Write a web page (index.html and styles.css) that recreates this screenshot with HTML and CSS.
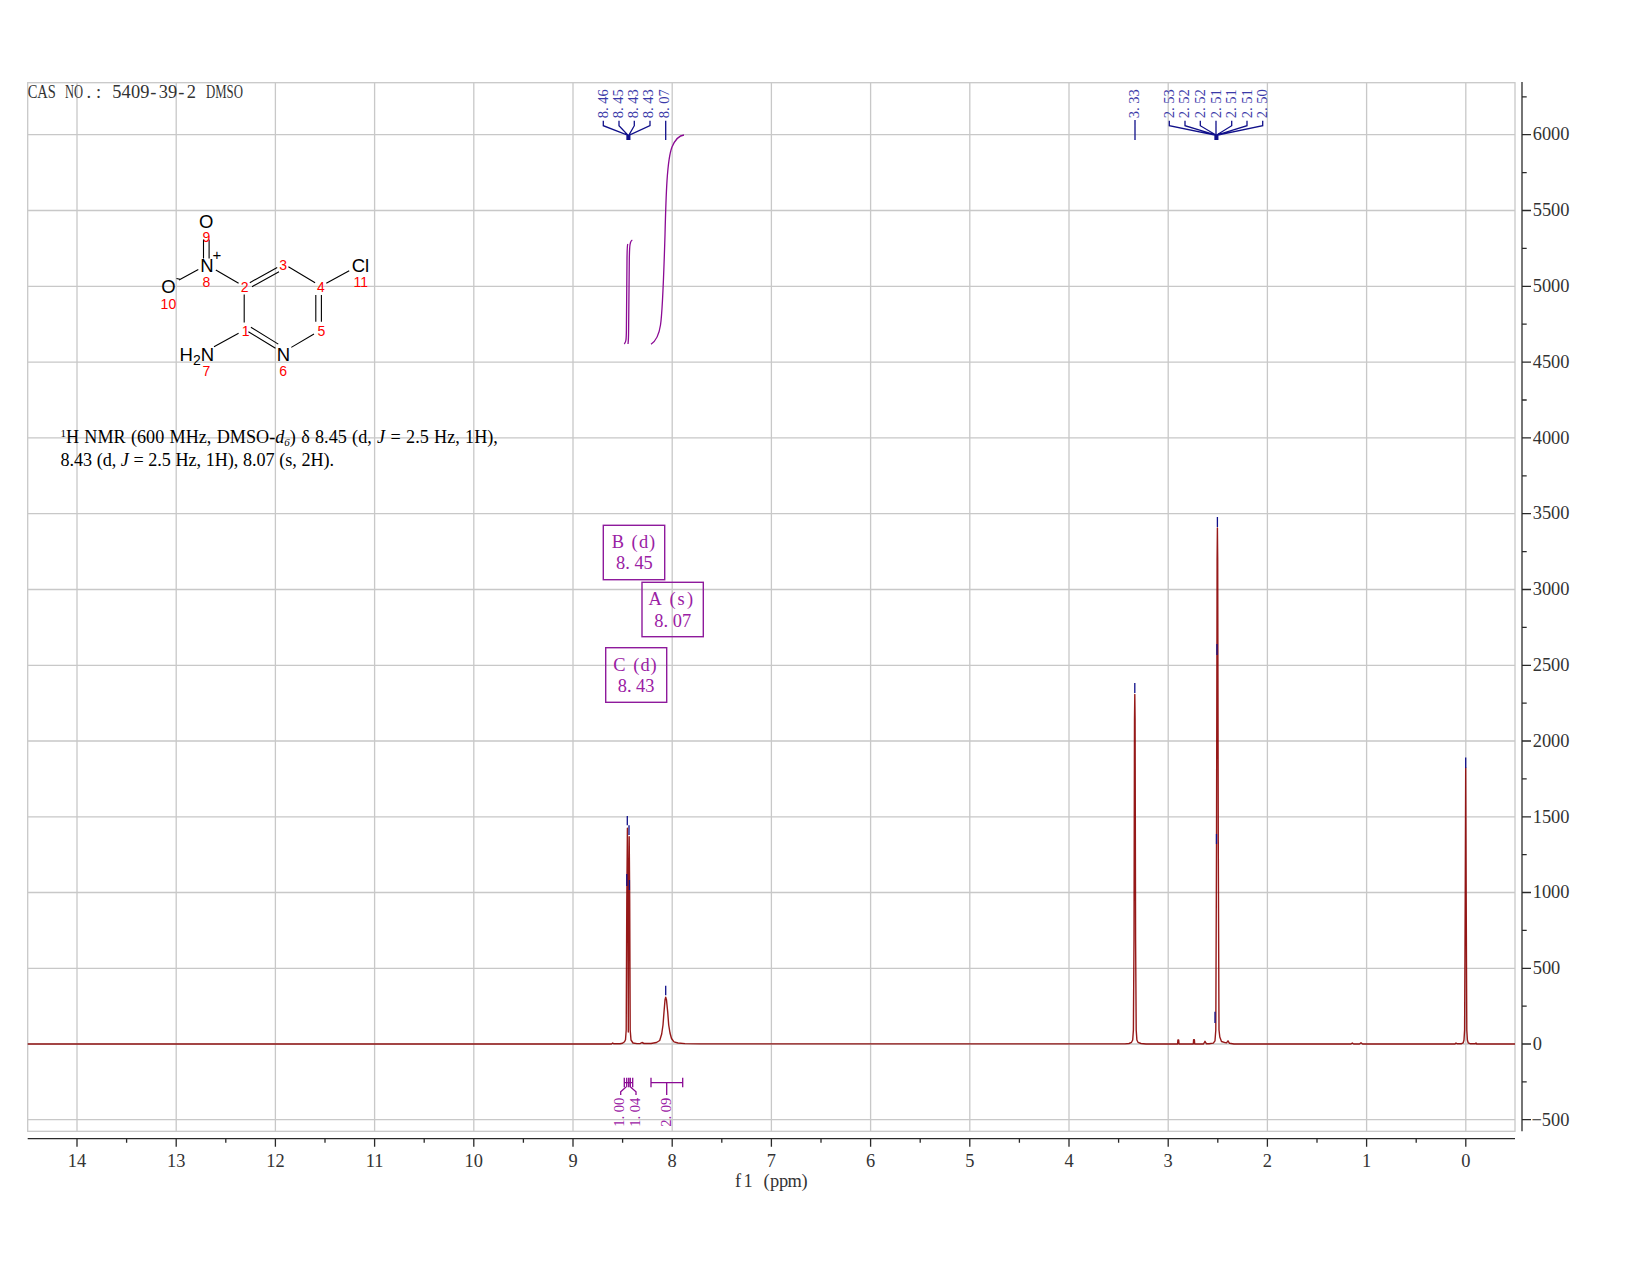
FILE: index.html
```html
<!DOCTYPE html>
<html lang="en">
<head>
<meta charset="utf-8">
<title>1H NMR spectrum</title>
<link rel="stylesheet" href="styles.css">
</head>
<body>
<figure class="chart">
<svg class="plot" width="1650" height="1275" viewBox="0 0 1650 1275" xmlns="http://www.w3.org/2000/svg">
  <!-- grid -->
  <path class="grid" d="M77 82.7V1131.3M176.2 82.7V1131.3M275.4 82.7V1131.3M374.6 82.7V1131.3M473.8 82.7V1131.3M573 82.7V1131.3M672.2 82.7V1131.3M771.4 82.7V1131.3M870.6 82.7V1131.3M969.8 82.7V1131.3M1069 82.7V1131.3M1168.2 82.7V1131.3M1267.4 82.7V1131.3M1366.6 82.7V1131.3M1465.8 82.7V1131.3"/>
  <path class="grid" d="M27.7 134.7H1515M27.7 210.5H1515M27.7 286.3H1515M27.7 362.1H1515M27.7 437.9H1515M27.7 513.7H1515M27.7 589.5H1515M27.7 665.3H1515M27.7 741H1515M27.7 816.8H1515M27.7 892.5H1515M27.7 968.3H1515M27.7 1044H1515M27.7 1119.7H1515"/>
  <rect class="grid" x="27.7" y="82.7" width="1487.3" height="1048.6"/>

  <!-- axes -->
  <path class="axis" d="M27.7 1138.7H1515"/>
  <path class="axis" d="M77 1138.7V1146.7M176.2 1138.7V1146.7M275.4 1138.7V1146.7M374.6 1138.7V1146.7M473.8 1138.7V1146.7M573 1138.7V1146.7M672.2 1138.7V1146.7M771.4 1138.7V1146.7M870.6 1138.7V1146.7M969.8 1138.7V1146.7M1069 1138.7V1146.7M1168.2 1138.7V1146.7M1267.4 1138.7V1146.7M1366.6 1138.7V1146.7M1465.8 1138.7V1146.7"/>
  <path class="axis" d="M126.6 1138.7V1142.7M225.8 1138.7V1142.7M325 1138.7V1142.7M424.2 1138.7V1142.7M523.4 1138.7V1142.7M622.6 1138.7V1142.7M721.8 1138.7V1142.7M821 1138.7V1142.7M920.2 1138.7V1142.7M1019.4 1138.7V1142.7M1118.6 1138.7V1142.7M1217.8 1138.7V1142.7M1317 1138.7V1142.7M1416.2 1138.7V1142.7"/>
  <path class="axis" d="M1522 82V1131.3"/>
  <path class="axis" d="M1522 134.7H1531M1522 210.5H1531M1522 286.3H1531M1522 362.1H1531M1522 437.9H1531M1522 513.7H1531M1522 589.5H1531M1522 665.3H1531M1522 741H1531M1522 816.8H1531M1522 892.5H1531M1522 968.3H1531M1522 1044H1531M1522 1119.7H1531"/>
  <path class="axis" d="M1522 96.8H1526.7M1522 172.6H1526.7M1522 248.4H1526.7M1522 324.2H1526.7M1522 400H1526.7M1522 475.8H1526.7M1522 551.6H1526.7M1522 627.4H1526.7M1522 703.1H1526.7M1522 778.9H1526.7M1522 854.7H1526.7M1522 930.4H1526.7M1522 1006.2H1526.7M1522 1081.9H1526.7"/>

  <g class="tick-x">
    <text x="77" y="1167">14</text><text x="176.2" y="1167">13</text><text x="275.4" y="1167">12</text><text x="374.6" y="1167">11</text><text x="473.8" y="1167">10</text><text x="573" y="1167">9</text><text x="672.2" y="1167">8</text><text x="771.4" y="1167">7</text><text x="870.6" y="1167">6</text><text x="969.8" y="1167">5</text><text x="1069" y="1167">4</text><text x="1168.2" y="1167">3</text><text x="1267.4" y="1167">2</text><text x="1366.6" y="1167">1</text><text x="1465.8" y="1167">0</text>
  </g>
  <g class="tick-y">
    <text x="1532.7" y="140.4">6000</text><text x="1532.7" y="216.2">5500</text><text x="1532.7" y="292">5000</text><text x="1532.7" y="367.8">4500</text><text x="1532.7" y="443.6">4000</text><text x="1532.7" y="519.4">3500</text><text x="1532.7" y="595.2">3000</text><text x="1532.7" y="671">2500</text><text x="1532.7" y="746.8">2000</text><text x="1532.7" y="822.6">1500</text><text x="1532.7" y="898.3">1000</text><text x="1532.7" y="974">500</text><text x="1532.7" y="1050">0</text><text x="1531.5" y="1125.5">−500</text>
  </g>
  <text class="mono" x="735 743.5 752 763.5 770 779 787.5 801.5" y="1187">f1 (ppm)</text>

  <!-- header -->
  <text class="mono" transform="translate(27.7 97.7) scale(.788 1)">CAS</text>
  <text class="mono" transform="translate(65 97.7) scale(.68 1)">NO</text>
  <text class="mono" x="86.5 96" y="97.7">.:</text>
  <text class="mono" x="112.3 121.6 130.9 140.2 150.3 158.8 168.1 178.2 186.7" y="97.7">5409-39-2</text>
  <text class="mono" transform="translate(206 97.7) scale(.696 1)">DMSO</text>

  <!-- spectrum -->
  <path class="fid" d="M27.7 1044H611.5L612.7 1043 613.9 1043.8H620L622.5 1043.3 624.5 1041.8 625.5 1039.8 626.2 1030 626.8 900 627.4 828.3 627.9 900 628.3 1032 628.7 900 629.2 836.7 629.7 900 630.2 1030 631 1040 633 1043 637 1043.6H640L642 1042.5 644 1043.5 651 1043.5 656.5 1042.5 659.7 1040.5 661.7 1034 663 1025 664 1012 665 1000 665.7 997.3 666.5 1000 667.7 1012 668.7 1025 670 1033 671.5 1038.5 674 1041.9 678 1043 685 1043.6 700 1043.9H1125L1129 1043.5 1131.5 1042.3 1132.7 1040 1133.4 1030 1134 940 1134.5 720 1134.8 694.5 1135.1 720 1135.6 940 1136.2 1030 1136.9 1040 1138 1042.3 1141 1043.5 1146 1044H1177.6L1177.9 1040 1178.7 1040 1179 1044H1193.3L1193.6 1039.8 1194.4 1039.8 1194.7 1044H1203.5L1205 1041.3 1206.5 1043.8H1209L1213.3 1043.1 1215 1040.8 1215.8 1030 1216.5 850 1217.1 560 1217.4 528 1217.7 560 1218.3 850 1219 1030 1219.8 1037 1221.5 1041.5 1225 1042.6 1226.5 1042.8 1228 1040.8 1229.5 1043.3 1234 1044H1351L1352.3 1043 1353.6 1044H1359.5L1361 1042.8 1362.5 1044H1455L1456 1043 1457 1043.7H1461.5L1463.2 1042.8 1464 1040 1464.6 1030 1465.2 900 1465.7 768 1466.2 900 1466.8 1030 1467.4 1040 1468.2 1042.8 1470 1043.7H1475.3L1476 1043 1476.7 1044H1515"/>

  <!-- integrals -->
  <path class="integ" d="M624.3 344C626 342 626.3 340 626.4 330L627 260C627.1 248 627.2 245 627.8 244"/>
  <path class="integ" d="M628 344C628.3 342 628.5 340 628.6 330L629.3 260C629.5 245 630 241 632.3 240"/>
  <path class="integ" d="M651 344.3C656 341 659 335 660.5 325C662.5 312 663.5 285 665 235C666 195 667 160 672 147C675 140 679 135.5 684 135"/>
  <path class="integ" d="M651 1077.7V1087.3M651 1082.7H682.7M682.7 1077.7V1087.3M666.7 1082.7V1095"/>
  <path class="integ" d="M624.3 1077.7V1087.3M626.7 1077.7V1087.3M628.7 1077.7V1087.3M630.3 1077.7V1087.3M632.7 1077.7V1087.3M624.3 1082.7H632.7"/>
  <path class="integ" d="M620.7 1095V1091.7L626 1087M636 1095V1091.7L630.5 1087"/>
  <text class="integ-label" transform="translate(624.3 1126.7) rotate(-90)" dx="0 0 3.6">1.00</text>
  <text class="integ-label" transform="translate(640 1126.7) rotate(-90)" dx="0 0 3.6">1.04</text>
  <text class="integ-label" transform="translate(671 1126.7) rotate(-90)" dx="0 0 3.6">2.09</text>

  <!-- peak picks -->
  <path class="mark" d="M627.3 816V825.3M629 825.3V835M626.8 874V886M629.4 880V890M665.7 985.7V995.3M1134.8 683V693M1217.4 517V527M1217 644V655M1216.5 834V844M1215 1011.7V1023M1465.7 757.6V768"/>
  <path class="mark" d="M603.3 120.7V125.7L627 135V140M619 120.7V125.7L627.8 135V140M634.3 120.7V125.7L629 135V140M650 120.7V125.7L629.8 135V140M665.7 120.7V140M1135 120V140M1169.3 120.7V125.7L1215 135V140M1185 120.7V125.7L1215.6 135V140M1200.3 120.7V125.7L1216 135V140M1216 120.7V140M1231.7 120.7V125.7L1216.6 135V140M1247 120.7V125.7L1217.2 135V140M1262.7 120.7V125.7L1217.8 135V140"/>
  <g class="pick">
    <text transform="translate(607.7 118.3) rotate(-90)" dx="0 0 3.6">8.46</text>
    <text transform="translate(622.7 118.3) rotate(-90)" dx="0 0 3.6">8.45</text>
    <text transform="translate(638.3 118.3) rotate(-90)" dx="0 0 3.6">8.43</text>
    <text transform="translate(653.3 118.3) rotate(-90)" dx="0 0 3.6">8.43</text>
    <text transform="translate(669.3 118.3) rotate(-90)" dx="0 0 3.6">8.07</text>
    <text transform="translate(1139.3 118.3) rotate(-90)" dx="0 0 3.6">3.33</text>
    <text transform="translate(1174 118.3) rotate(-90)" dx="0 0 3.6">2.53</text>
    <text transform="translate(1189 118.3) rotate(-90)" dx="0 0 3.6">2.52</text>
    <text transform="translate(1205 118.3) rotate(-90)" dx="0 0 3.6">2.52</text>
    <text transform="translate(1220.7 118.3) rotate(-90)" dx="0 0 3.6">2.51</text>
    <text transform="translate(1236 118.3) rotate(-90)" dx="0 0 3.6">2.51</text>
    <text transform="translate(1251.7 118.3) rotate(-90)" dx="0 0 3.6">2.51</text>
    <text transform="translate(1266.7 118.3) rotate(-90)" dx="0 0 3.6">2.50</text>
  </g>

  <!-- multiplet boxes -->
  <rect class="box" x="603.3" y="525.3" width="61.4" height="54.4"/>
  <rect class="box" x="642" y="582.3" width="61.3" height="54.4"/>
  <rect class="box" x="605.7" y="647.7" width="61" height="54.6"/>
  <g class="box-text">
    <text x="611.7 620.9 631.6 639 649" y="547.7">B (d)</text>
    <text x="616" y="569.3" dx="0 0 4.6">8.45</text>
    <text x="648.5 658.7 669.6 677.5 687" y="605">A (s)</text>
    <text x="654.3" y="626.7" dx="0 0 4.6">8.07</text>
    <text x="613.3 622.5 633.2 640.6 650.6" y="670.7">C (d)</text>
    <text x="617.7" y="691.7" dx="0 0 4.6">8.43</text>
  </g>

  <!-- molecule -->
  <path class="bond" d="M244.2 294.4V322.4M250.9 327.3L278.3 344.1M248.4 331.7L275.5 348.3M291.3 347.4L314 334M315.8 295V321.7M321.4 295V321.7M288.4 266.7L315.1 282.7M249.8 282.7L277.2 267.4M252 286.7L279 271.7M215.8 270L238.6 283.3M179 280L198.3 269.4M176.5 278.5L180 279.3M203.5 239.4V258.4M209.1 239.4V258.4M326.3 283.3L349.2 270.7M214 346.7L238.6 333.3"/>
  <g class="atom">
    <text x="206.3" y="227.7">O</text>
    <text x="207" y="271.7">N</text>
    <text x="168.4" y="293.3">O</text>
    <text x="360.4" y="272">Cl</text>
    <text x="283.5" y="361">N</text>
    <text x="196.8" y="361">H<tspan class="sub" dy="4">2</tspan><tspan dy="-4">N</tspan></text>
    <text class="charge" x="216.9" y="260">+</text>
  </g>
  <g class="num">
    <text x="206.3" y="242.4">9</text>
    <text x="206.3" y="287">8</text>
    <text x="168.4" y="308.9">10</text>
    <text x="244.6" y="292">2</text>
    <text x="283.2" y="270">3</text>
    <text x="321" y="291.7">4</text>
    <text x="321.4" y="336">5</text>
    <text x="245.6" y="336.4">1</text>
    <text x="283.2" y="375.5">6</text>
    <text x="206.3" y="375.5">7</text>
    <text x="360.7" y="287">11</text>
  </g>

  <!-- assignment text -->
  <text class="nmr nmr-wide" x="60.4" y="443.3"><tspan class="sup" dy="-6">1</tspan><tspan dy="6">H NMR (600 MHz, DMSO-</tspan><tspan class="ital">d</tspan><tspan class="sub-small" dy="3">6</tspan><tspan dy="-3">) δ 8.45 (d, </tspan><tspan class="ital">J</tspan> = 2.5 Hz, 1H),</text>
  <text class="nmr" x="60.4" y="466">8.43 (d, <tspan class="ital">J</tspan> = 2.5 Hz, 1H), 8.07 (s, 2H).</text>
</svg>
</figure>
</body>
</html>
```
FILE: styles.css
```css
html, body {
  margin: 0;
  padding: 0;
  background: #fff;
}
.chart {
  margin: 0;
  width: 1650px;
  height: 1275px;
}
.plot {
  display: block;
}
.grid {
  fill: none;
  stroke: #c8c8c8;
  stroke-width: 1.3;
}
.axis {
  fill: none;
  stroke: #2a2a2a;
  stroke-width: 1.3;
}
.tick-x text,
.tick-y text,
.mono {
  font-family: "Liberation Serif", serif;
  font-size: 18.4px;
  fill: #333;
}
.tick-x text {
  text-anchor: middle;
}
.fid {
  fill: none;
  stroke: #8b0000;
  stroke-opacity: 0.9;
  stroke-width: 1.4;
  stroke-linejoin: round;
}
.integ {
  fill: none;
  stroke: #8b0a94;
  stroke-width: 1.3;
}
.integ-label,
.pick text {
  font-family: "Liberation Serif", serif;
  font-size: 14.5px;
}
.integ-label {
  fill: #9a20a4;
}
.pick text {
  fill: #3a3aa8;
}
.mark {
  fill: none;
  stroke: #10108a;
  stroke-width: 1.3;
}
.box {
  fill: none;
  stroke: #8e1a9c;
  stroke-width: 1.4;
}
.box-text text {
  font-family: "Liberation Serif", serif;
  font-size: 18.4px;
  fill: #9a20a4;
}
.bond {
  fill: none;
  stroke: #000;
  stroke-width: 1.1;
}
.atom text {
  font-family: "Liberation Sans", sans-serif;
  font-size: 18.5px;
  fill: #000;
  text-anchor: middle;
}
.atom .sub {
  font-size: 14px;
}
.atom .charge {
  font-size: 15px;
}
.num text {
  font-family: "Liberation Sans", sans-serif;
  font-size: 14px;
  fill: #f00;
  text-anchor: middle;
}
.nmr {
  font-family: "Liberation Serif", serif;
  font-size: 18.15px;
  fill: #000;
}
.nmr-wide {
  word-spacing: 0.8px;
}
.ital {
  font-style: italic;
}
.sup {
  font-size: 11px;
}
.sub-small {
  font-size: 11px;
  font-style: italic;
}
```
